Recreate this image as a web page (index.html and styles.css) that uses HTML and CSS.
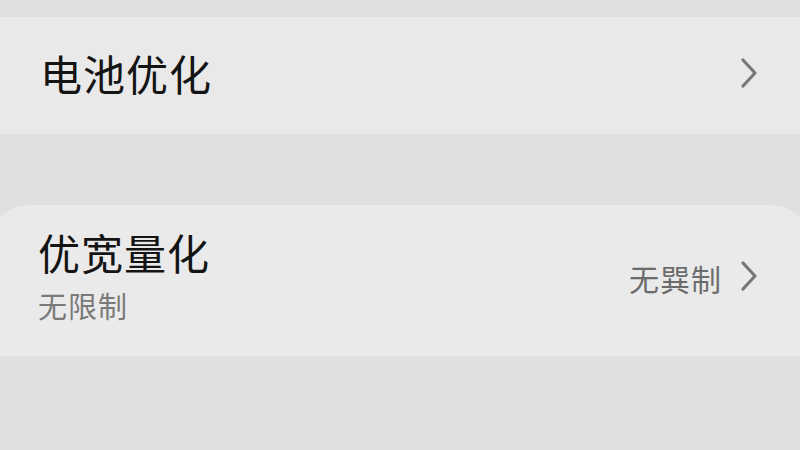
FILE: index.html
```html
<!DOCTYPE html>
<html lang="zh-CN">
<head>
<meta charset="utf-8">
<link rel="stylesheet" href="styles.css">
</head>
<body>
<div class="page">
  <div class="card card-top">
    <div class="row">
      <div class="title">电池优化</div>
      <svg class="chev" viewBox="0 0 18 32" width="18" height="32"><path d="M3 3 L15 16 L3 29" fill="none" stroke="#777" stroke-width="3.2" stroke-linecap="round" stroke-linejoin="round"/></svg>
    </div>
  </div>
  <div class="card card-bottom">
    <div class="row">
      <div class="texts">
        <div class="title">优宽量化</div>
        <div class="sub">无限制</div>
      </div>
      <div class="value">无巽制</div>
      <svg class="chev" viewBox="0 0 18 32" width="18" height="32"><path d="M3 3 L15 16 L3 29" fill="none" stroke="#777" stroke-width="3.2" stroke-linecap="round" stroke-linejoin="round"/></svg>
    </div>
  </div>
</div>
</body>
</html>
```

FILE: styles.css
```css
html, body {
  margin: 0;
  padding: 0;
  background: #e0dfe2;
  overflow: hidden;
}
.page {
  width: 800px;
  height: 450px;
  padding-top: 17px;
  box-sizing: border-box;
  font-family: "Noto Sans CJK SC", "Noto Sans", sans-serif;
  display: flex;
  flex-direction: column;
  gap: 71px;
}
.card {
  background: #e9e9e9;
}
.card-top {
  height: 117px;
}
.card-top .row {
  padding-bottom: 6px;
  box-sizing: border-box;
}
.card-bottom {
  height: 151px;
  margin: 0 -8px;
  border-radius: 36px 36px 0 0;
  background: #eaeaea;
}
.row {
  height: 100%;
  display: flex;
  align-items: center;
  padding: 0 42px 0 40px;
}
.card-bottom .row {
  padding: 0 50px 10px 46px;
  box-sizing: border-box;
}
.title {
  font-size: 42px;
  line-height: 1;
  color: #141414;
  letter-spacing: 1px;
  flex: 1;
}
.texts {
  flex: 1;
  display: flex;
  flex-direction: column;
  gap: 18px;
}
.sub {
  font-size: 29px;
  line-height: 1;
  color: #7a7a7a;
  letter-spacing: 1px;
}
.value {
  font-size: 30px;
  line-height: 1;
  color: #6c6c6c;
  letter-spacing: 1px;
  margin-right: 18px;
  margin-top: 4px;
}
.chev {
  display: block;
  flex: none;
}
```
